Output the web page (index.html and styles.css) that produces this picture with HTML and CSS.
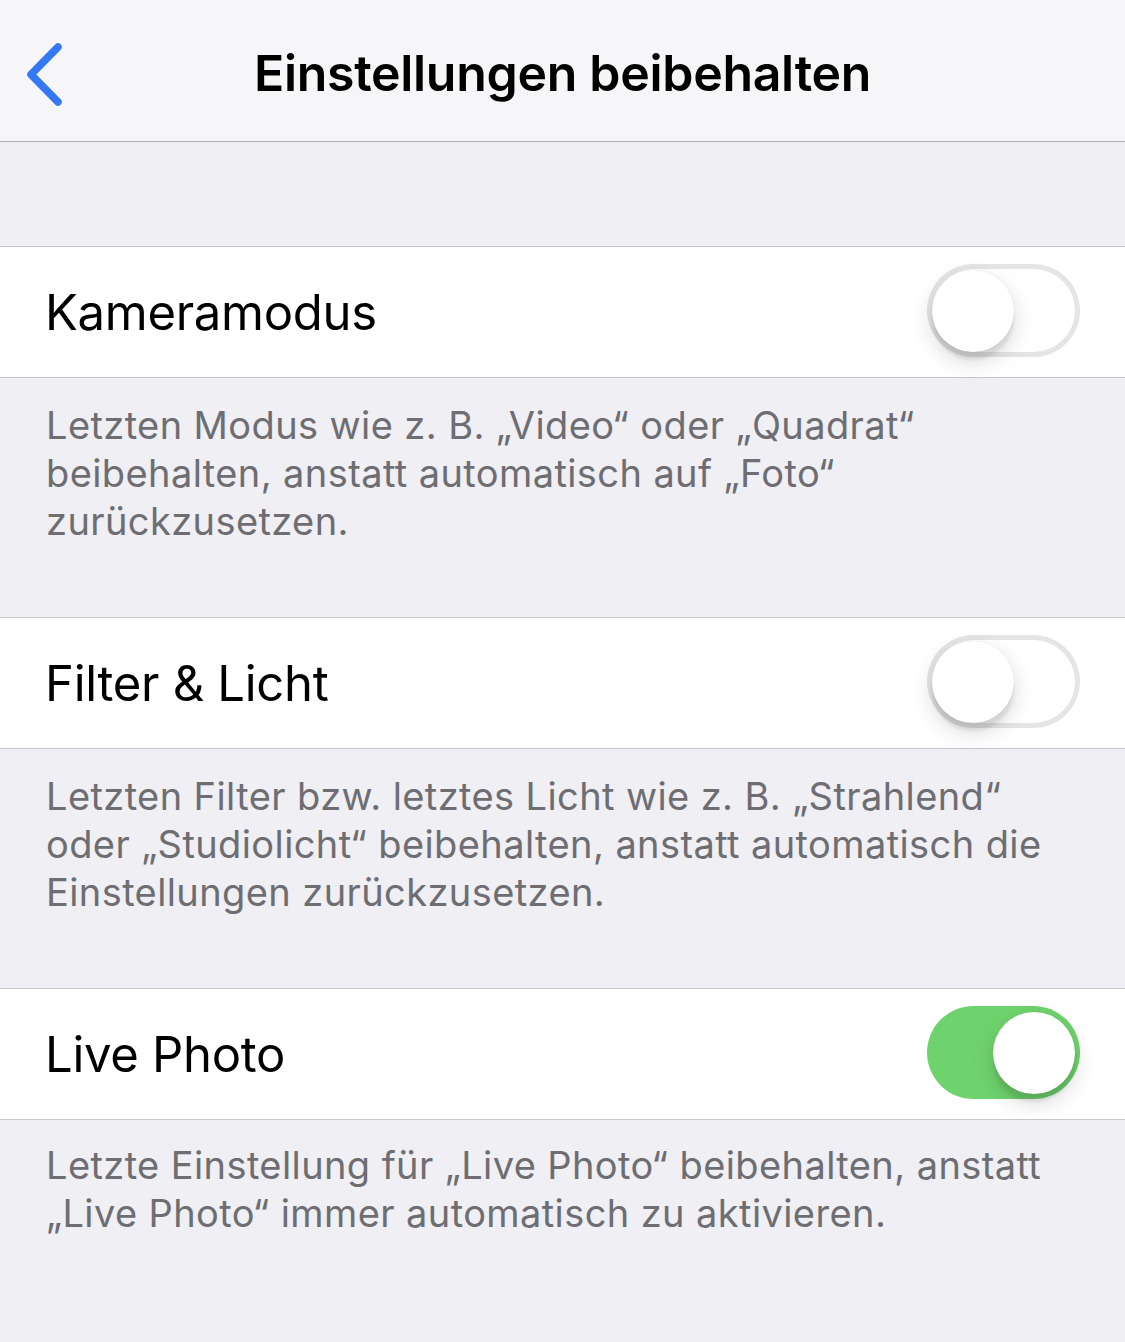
FILE: index.html
```html
<!DOCTYPE html>
<html lang="de">
<head>
<meta charset="utf-8">
<title>Einstellungen beibehalten</title>
<link rel="stylesheet" href="styles.css">
</head>
<body>
<header class="nav">
  <div class="nav-left">
    <svg class="chevron" width="44" height="70" viewBox="0 0 44 70" aria-label="Zurück">
      <path d="M32 6 L5 33.5 L32 61" fill="none" stroke="#3478f6" stroke-width="7.5" stroke-linecap="round" stroke-linejoin="round"/>
    </svg>
  </div>
  <h1 class="nav-title">Einstellungen beibehalten</h1>
  <div class="nav-right"></div>
</header>
<main class="content">
  <div class="top-gap"></div>

  <section class="group">
    <div class="row">
      <span class="row-label">Kameramodus</span>
      <div class="toggle"><span class="knob"></span></div>
    </div>
    <p class="footer">Letzten Modus wie z. B. „Video“ oder „Quadrat“<br>beibehalten, anstatt automatisch auf „Foto“<br>zurückzusetzen.</p>
  </section>

  <section class="group">
    <div class="row">
      <span class="row-label">Filter &amp; Licht</span>
      <div class="toggle"><span class="knob"></span></div>
    </div>
    <p class="footer">Letzten Filter bzw. letztes Licht wie z. B. „Strahlend“<br>oder „Studiolicht“ beibehalten, anstatt automatisch die<br>Einstellungen zurückzusetzen.</p>
  </section>

  <section class="group last">
    <div class="row">
      <span class="row-label">Live Photo</span>
      <div class="toggle on"><span class="knob"></span></div>
    </div>
    <p class="footer">Letzte Einstellung für „Live Photo“ beibehalten, anstatt<br>„Live Photo“ immer automatisch zu aktivieren.</p>
  </section>
</main>
</body>
</html>
```

FILE: styles.css
```css
* { box-sizing: border-box; }

html, body {
  margin: 0;
  padding: 0;
}

body {
  width: 1125px;
  height: 1342px;
  overflow: hidden;
  background: #efeff4;
  font-family: Inter, "Noto Sans", "Liberation Sans", sans-serif;
  color: #000;
}

.nav {
  height: 142px;
  background: #f6f6f8;
  border-bottom: 1px solid #b3b3b6;
  display: grid;
  grid-template-columns: 1fr auto 1fr;
  align-items: center;
}

.nav-left {
  padding-left: 26px;
  display: flex;
  align-items: center;
  padding-top: 10px;
}

.chevron { display: block; }

.nav-title {
  margin: 0;
  font-size: 50px;
  font-weight: 600;
  letter-spacing: -0.3px;
  padding-top: 5px;
}

.top-gap {
  height: 104px;
}

.group {
  display: flex;
  flex-direction: column;
}

.row {
  height: 132px;
  background: #fff;
  border-top: 1px solid #c8c7cc;
  border-bottom: 1px solid #c8c7cc;
  display: flex;
  align-items: center;
  justify-content: space-between;
  padding: 0 45px 0 45px;
}

.row-label {
  font-size: 49px;
  letter-spacing: -0.3px;
}

.toggle {
  width: 153px;
  height: 93px;
  border-radius: 47px;
  background: #fff;
  box-shadow: inset 0 0 0 5px #e5e5e7;
  display: flex;
  align-items: center;
  justify-content: flex-start;
  padding: 0 5px;
  margin-top: -3px;
}

.toggle.on {
  background: #6fd36d;
  box-shadow: none;
  justify-content: flex-end;
}

.knob {
  width: 82px;
  height: 82px;
  border-radius: 50%;
  background: #fff;
  box-shadow: 0 9px 22px rgba(0, 0, 0, 0.16), 0 8px 3px rgba(0, 0, 0, 0.07), 0 0 1px rgba(0, 0, 0, 0.15);
}

.footer {
  margin: 0;
  height: 239px;
  padding: 23px 46px 0;
  font-size: 38px;
  line-height: 48px;
  color: #6d6d72;
  letter-spacing: 0.4px;
}

.last .footer {
  height: auto;
  padding-top: 21px;
}
```
